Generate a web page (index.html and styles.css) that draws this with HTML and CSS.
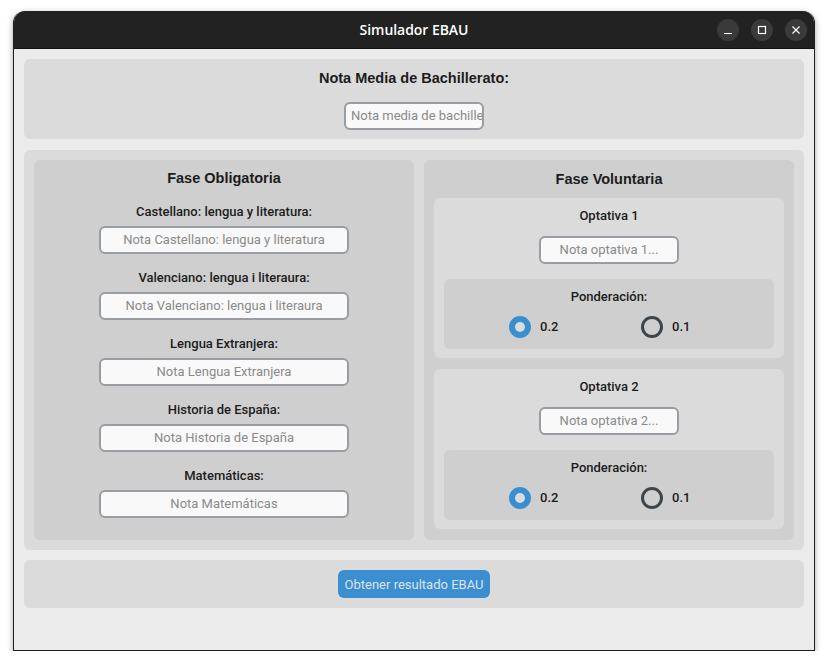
FILE: index.html
```html
<!DOCTYPE html>
<html lang="es">
<head>
<meta charset="utf-8">
<title>Simulador EBAU</title>
<link rel="stylesheet" href="styles.css">
</head>
<body>
<div class="window">
  <header class="titlebar">
    <span class="spacer"></span>
    <span class="win-title">Simulador EBAU</span>
    <span class="controls">
      <span class="ctl"><svg width="10" height="10" viewBox="0 0 10 10"><path d="M1 8.5h8" stroke="#fff" stroke-width="1.2"/></svg></span>
      <span class="ctl"><svg width="10" height="10" viewBox="0 0 10 10"><rect x="1.5" y="1.5" width="7" height="7" fill="none" stroke="#fff" stroke-width="1.2"/></svg></span>
      <span class="ctl"><svg width="10" height="10" viewBox="0 0 10 10"><path d="M1.5 1.5l7 7M8.5 1.5l-7 7" stroke="#fff" stroke-width="1.2"/></svg></span>
    </span>
  </header>
  <main class="content">
    <section class="frame frame-top">
      <h1 class="title">Nota Media de Bachillerato:</h1>
      <div class="entry entry-small entry-left">Nota media de bachillerato...</div>
    </section>
    <section class="frame frame-mid">
      <div class="panel panel-left">
        <h2 class="title">Fase Obligatoria</h2>
        <div class="field">
          <div class="label">Castellano: lengua y literatura:</div>
          <div class="entry entry-wide">Nota Castellano: lengua y literatura</div>
        </div>
        <div class="field">
          <div class="label">Valenciano: lengua i literaura:</div>
          <div class="entry entry-wide">Nota Valenciano: lengua i literaura</div>
        </div>
        <div class="field">
          <div class="label">Lengua Extranjera:</div>
          <div class="entry entry-wide">Nota Lengua Extranjera</div>
        </div>
        <div class="field">
          <div class="label">Historia de España:</div>
          <div class="entry entry-wide">Nota Historia de España</div>
        </div>
        <div class="field">
          <div class="label">Matemáticas:</div>
          <div class="entry entry-wide">Nota Matemáticas</div>
        </div>
      </div>
      <div class="panel panel-right">
        <h2 class="title">Fase Voluntaria</h2>
        <div class="card">
          <div class="label">Optativa 1</div>
          <div class="entry entry-small">Nota optativa 1...</div>
          <div class="pond">
            <div class="label">Ponderación:</div>
            <div class="radios">
              <span class="radio"><span class="dot checked"></span><span class="rlabel">0.2</span></span>
              <span class="radio"><span class="dot"></span><span class="rlabel">0.1</span></span>
            </div>
          </div>
        </div>
        <div class="card card-2">
          <div class="label">Optativa 2</div>
          <div class="entry entry-small">Nota optativa 2...</div>
          <div class="pond">
            <div class="label">Ponderación:</div>
            <div class="radios">
              <span class="radio"><span class="dot checked"></span><span class="rlabel">0.2</span></span>
              <span class="radio"><span class="dot"></span><span class="rlabel">0.1</span></span>
            </div>
          </div>
        </div>
      </div>
    </section>
    <section class="frame frame-bottom">
      <button class="btn">Obtener resultado EBAU</button>
    </section>
  </main>
</div>
</body>
</html>
```

FILE: styles.css
```css
* { box-sizing: border-box; }

html, body {
  margin: 0;
  padding: 0;
  background: #ffffff;
  font-family: Roboto, "Liberation Sans", sans-serif;
  color: #1c1c1c;
}

.window {
  margin: 11px 0 0 13px;
  width: 802px;
  height: 640px;
  border: 1px solid #1e1e1e;
  border-top: none;
  border-radius: 12px 12px 0 0;
  overflow: hidden;
  background: #ebebeb;
  box-shadow: 0 2px 6px rgba(0, 0, 0, 0.35);
  display: flex;
  flex-direction: column;
}

.titlebar {
  height: 38px;
  background: #222222;
  border-bottom: 1px solid #111;
  display: grid;
  grid-template-columns: 1fr auto 1fr;
  align-items: center;
  flex: none;
}

.win-title {
  color: #ffffff;
  font-family: "Open Sans", "DejaVu Sans", sans-serif;
  font-weight: 600;
  font-size: 14px;
  letter-spacing: -0.05px;
}

.controls {
  justify-self: end;
  display: flex;
  gap: 12px;
  padding-right: 7px;
}

.ctl {
  width: 22px;
  height: 22px;
  border-radius: 50%;
  background: #3a3a3a;
  display: flex;
  align-items: center;
  justify-content: center;
}

.content {
  padding: 10px;
  display: flex;
  flex-direction: column;
  gap: 11px;
}

.frame {
  background: #dbdbdb;
  border-radius: 6px;
}

.title {
  margin: 0;
  font-family: "Liberation Sans", Arial, sans-serif;
  font-weight: bold;
  font-size: 14.5px;
  line-height: 18px;
  text-align: center;
  color: #1c1c1c;
}

.panel-left .title { line-height: 17px; }

.frame-top {
  height: 80px;
  padding-top: 10px;
  display: flex;
  flex-direction: column;
  align-items: center;
}

.frame-top .entry { margin-top: 15px; }

.entry {
  height: 28px;
  border: 2px solid #979da2;
  border-radius: 6px;
  background: #f9f9fa;
  color: #8a8a8a;
  font-size: 13px;
  line-height: 24px;
  text-align: center;
  white-space: nowrap;
  overflow: hidden;
}

.entry-small { width: 140px; }
.entry-wide { width: 250px; }
.entry-left { text-align: left; padding-left: 5px; }

.frame-mid {
  padding: 10px;
  display: grid;
  grid-template-columns: 380px 370px;
  gap: 10px;
}

.panel {
  height: 380px;
  background: #cfcfcf;
  border-radius: 6px;
  padding: 10px;
  display: flex;
  flex-direction: column;
  align-items: center;
}

.label {
  font-size: 13px;
  font-weight: 500;
  line-height: 18px;
  text-align: center;
  color: #1c1c1c;
}

.field {
  margin-top: 15px;
  display: flex;
  flex-direction: column;
  align-items: center;
  gap: 5px;
}

.panel-left .field:first-of-type { margin-top: 16px; }

.card {
  align-self: stretch;
  margin-top: 10px;
  background: #dbdbdb;
  border-radius: 6px;
  padding: 9px 10px 9px;
  display: flex;
  flex-direction: column;
  align-items: center;
}

.card-2 { margin-top: 11px; }

.card .entry { margin-top: 11px; }

.pond {
  align-self: stretch;
  margin-top: 15px;
  height: 70px;
  background: #cfcfcf;
  border-radius: 6px;
  padding-top: 9px;
}

.radios {
  margin-top: 10px;
  display: flex;
  padding-left: 65px;
}

.radio {
  width: 132px;
  display: flex;
  align-items: center;
  gap: 9px;
}

.dot {
  width: 22px;
  height: 22px;
  border-radius: 50%;
  border: 3px solid #3e454a;
  flex: none;
}

.dot.checked {
  border: 6px solid #3b8ed0;
  background: #dcdcdc;
}

.rlabel {
  font-size: 13px;
  font-weight: 500;
  line-height: 22px;
  color: #1c1c1c;
}

.frame-bottom {
  height: 48px;
  margin-top: -1px;
  padding: 10px;
  display: flex;
  justify-content: center;
}

.btn {
  width: 152px;
  height: 28px;
  border: none;
  border-radius: 6px;
  background: #3b8ed0;
  color: #dce4ee;
  font-family: Roboto, "Liberation Sans", sans-serif;
  font-size: 13px;
  padding: 0;
}
```
